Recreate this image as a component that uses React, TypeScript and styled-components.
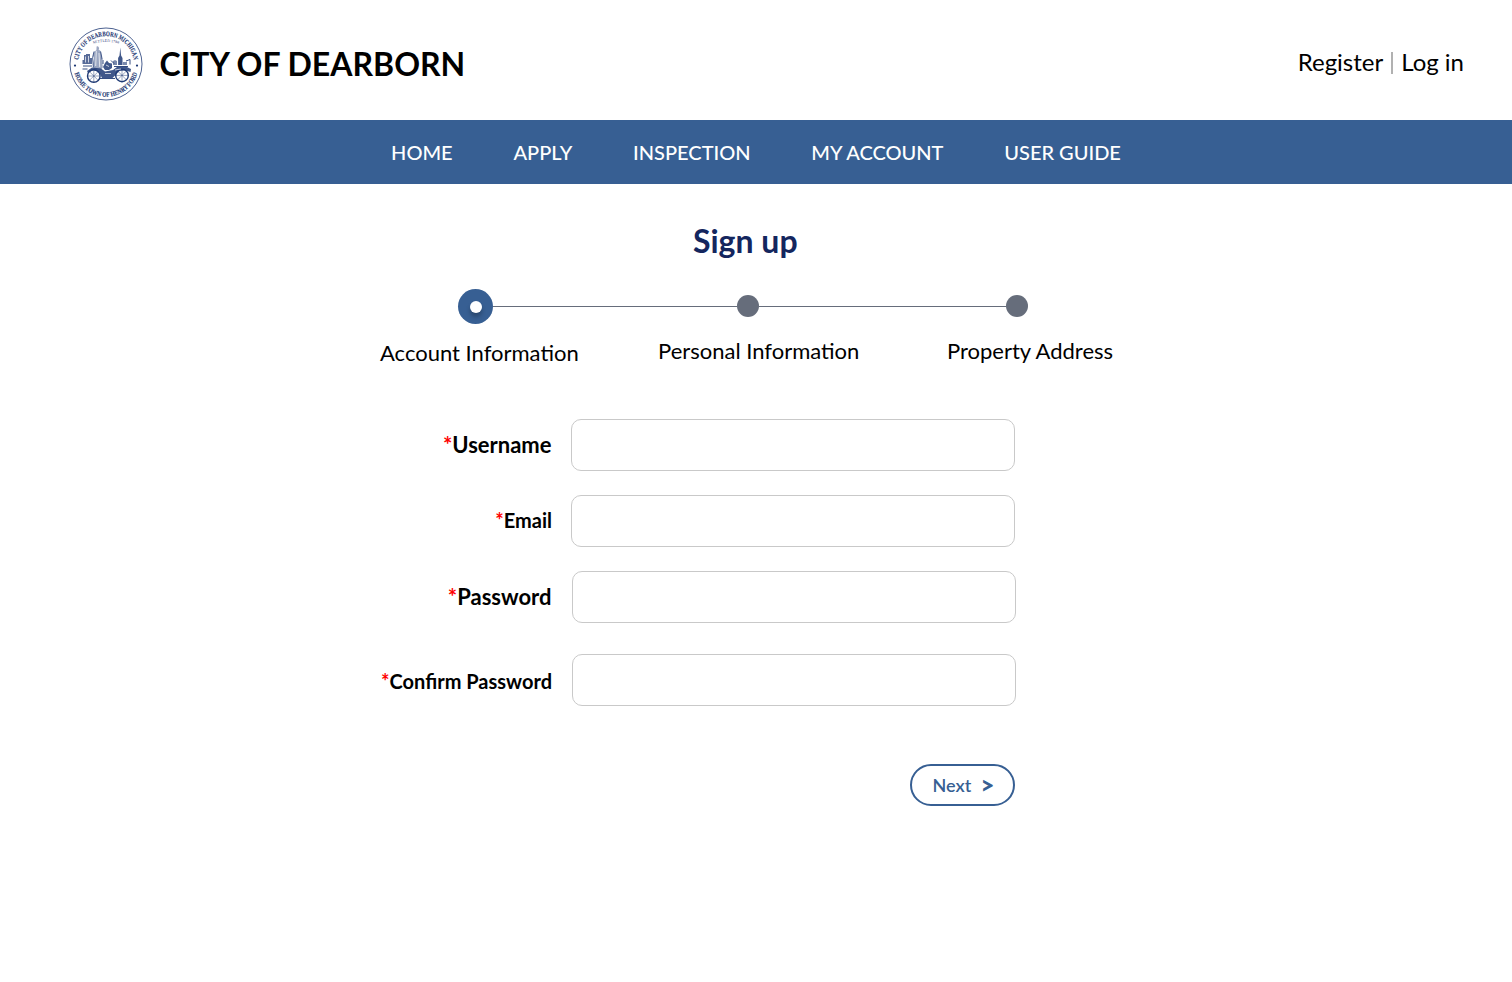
import React from "react";
import styled, { createGlobalStyle } from "styled-components";

const BLUE = "#375f93";
const NAVY = "#14265e";
const SEAL = "#1f3a75";
const SLATE = "#666d7b";

const GlobalStyle = createGlobalStyle`
  * { box-sizing: border-box; }
  body {
    margin: 0;
    background: #fff;
    color: #000;
    font-family: Lato, "Liberation Sans", sans-serif;
  }
`;

const Page = styled.div`
  min-height: 982px;
  white-space: nowrap;
`;

const Header = styled.header`
  height: 120px;
  padding: 27px 48px 0 69px;
  display: flex;
  align-items: flex-start;
  justify-content: space-between;
`;

const Brand = styled.div`
  display: flex;
  align-items: center;
  gap: 16.5px;
`;

const BrandName = styled.h1`
  margin: 0;
  font-size: 32px;
  line-height: 74px;
  font-weight: 700;
`;

const AuthLinks = styled.div`
  display: flex;
  align-items: center;
  height: 70px;
  gap: 8px;
`;

const AuthLink = styled.a`
  font-size: 24px;
  line-height: 30px;
`;

const Divider = styled.span`
  width: 2px;
  height: 22px;
  margin-top: 2px;
  background: #b1b1b1;
`;

const Nav = styled.nav`
  height: 64px;
  padding-bottom: 1px;
  background: ${BLUE};
  display: flex;
  align-items: center;
  justify-content: center;
  gap: 60.8px;
`;

const NavLink = styled.a`
  color: #fff;
  font-size: 20px;
  line-height: 26px;
  font-weight: 500;
`;

const Main = styled.main`
  width: 736px;
  margin: 0 auto 0 379px;
`;

const Title = styled.h2`
  margin: 0;
  padding: 37px 0 1px 314px;
  font-size: 32px;
  line-height: 40px;
  font-weight: 700;
  color: ${NAVY};
`;

const Track = styled.div`
  display: flex;
  align-items: center;
  height: 35px;
  margin: 27px 0 0 79px;
`;

const Dot = styled.span<{ $active?: boolean }>`
  flex: none;
  width: ${(p) => (p.$active ? 35 : 22)}px;
  height: ${(p) => (p.$active ? 35 : 22)}px;
  margin-bottom: ${(p) => (p.$active ? 0 : 1)}px;
  border-radius: 50%;
  background: ${(p) => (p.$active ? BLUE : SLATE)};
  display: flex;
  align-items: center;
  justify-content: center;
`;

const DotCore = styled.span`
  width: 12px;
  height: 12px;
  margin: 1px 0 0 1px;
  border-radius: 50%;
  background: #fff;
  box-shadow: 0 4px 4px rgba(0, 0, 0, 0.25);
`;

const Connector = styled.span<{ $width: number }>`
  width: ${(p) => p.$width}px;
  height: 1px;
  background: ${SLATE};
`;

const StepLabels = styled.div`
  display: flex;
  width: 735px;
  margin: 13px 0 0 1px;
`;

const StepLabel = styled.span<{ $active?: boolean; $width?: number }>`
  flex: none;
  width: ${(p) => (p.$width ? `${p.$width}px` : "auto")};
  font-size: 22px;
  line-height: 28px;
  padding-top: ${(p) => (p.$active ? 2 : 0)}px;
`;

const Form = styled.form`
  width: 637px;
  margin-top: 52px;
`;

const Field = styled.div<{ $gap: number }>`
  display: flex;
  align-items: center;
  height: 52px;
  margin-bottom: ${(p) => p.$gap}px;
`;

const FieldLabel = styled.label<{ $size: number; $top: number; $bottom: number; $inset: number }>`
  width: 173px;
  text-align: right;
  font-size: ${(p) => p.$size}px;
  line-height: 28px;
  font-weight: 700;
  padding: ${(p) => `${p.$top}px ${p.$inset}px ${p.$bottom}px 0`};
`;

const Star = styled.span`
  color: #f00;
`;

const Input = styled.input<{ $indent: number }>`
  width: 444px;
  height: 52px;
  margin-left: ${(p) => p.$indent}px;
  padding: 0 14px;
  border: 1px solid #c9c9c9;
  border-radius: 10px;
  background: #fff;
  font: inherit;
  outline: none;
`;

const NextButton = styled.button`
  display: flex;
  align-items: center;
  justify-content: space-between;
  width: 105px;
  height: 42px;
  margin: 58px 0 0 531px;
  padding: 0 18.5px 0 20.5px;
  border: 2px solid ${BLUE};
  border-radius: 21px;
  background: #fff;
  color: ${BLUE};
  font-family: inherit;
  font-size: 18px;
  line-height: 24px;
  font-weight: 600;
`;

const Arrow = styled.span`
  font-size: 24px;
  line-height: 24px;
  font-weight: 900;
`;

const Seal = () => (
  <svg width="74" height="74" viewBox="0 0 74 74" fill="none" stroke={SEAL}>
    <defs>
      <path id="sealTop" d="M9 37 A28 28 0 0 1 65 37" />
      <path id="sealBottom" d="M4.2 37 A32.8 32.8 0 0 0 69.8 37" />
      <path id="sealInner" d="M23 17 Q37 13 51 17" />
    </defs>
    <circle cx="37" cy="37" r="36" strokeWidth="0.8" />
    <g fill={SEAL} stroke="none" fontFamily="Liberation Serif, serif" fontWeight="700">
      <text fontSize="6.8" stroke={SEAL} strokeWidth="0.12">
        <textPath href="#sealTop" startOffset="50%" textAnchor="middle" textLength="80" lengthAdjust="spacingAndGlyphs">
          CITY OF DEARBORN MICHIGAN
        </textPath>
      </text>
      <text fontSize="6.8" stroke={SEAL} strokeWidth="0.12">
        <textPath href="#sealBottom" startOffset="50%" textAnchor="middle" textLength="84" lengthAdjust="spacingAndGlyphs">
          HOME TOWN OF HENRY FORD
        </textPath>
      </text>
      <text fontSize="3.8" fontWeight="400">
        <textPath href="#sealInner" startOffset="50%" textAnchor="middle" textLength="26">
          SETTLED 1786
        </textPath>
      </text>
      <circle cx="6" cy="38.6" r="1.1" />
      <circle cx="68" cy="38.6" r="1.1" />
      <path d="M13.5 37v-4h1.5v-5h2v-1h4v4h2v6z" opacity="0.75" />
      <path d="M51.3 20.5l.8 8 1.4 2.5V38h-4.4v-7l1.4-2.5z" opacity="0.85" />
      <path d="M44 38v-4l2-1 2 1v4zM54 38v-3h4v3z" opacity="0.6" />
      <path d="M27.6 19.5a1.8 1.8 0 0 1 2 2.9l2 1.6 1.4 7 .8 9.5-1.8 2h-7.2l-.6-6 .8-5-1-3 1.4-4 2-1.2z" opacity="0.45" />
      <path d="M36 36l2-2.4 2 2.4 3 .6V41l-3 2h-4l-2-3z" opacity="0.85" />
      <path d="M18 44l5-3.5 9 1 4 3 8-1.5 4-3 9-.5 5 2.5-.5 3-5-1.5-6 .5-4 4-3 3H33l-3-6-6-2-5 3z" opacity="0.85" />
    </g>
    <g strokeWidth="1.4">
      <circle cx="24.8" cy="49" r="6.3" />
      <circle cx="53" cy="48.4" r="6.3" />
    </g>
    <g strokeWidth="0.45">
      <path d="M24.8 43v12M19 49h12M20.6 44.8l8.4 8.4M29 44.8l-8.4 8.4M53 42.4v12M47 48.4h12M48.8 44.2l8.4 8.4M57.2 44.2l-8.4 8.4" />
      <path d="M31 51.5h15M14 39h9M13.5 42h5M45 39.5h14M57 34l4-1.5v5M34 33v4M42 33.5l3 3" strokeWidth="0.9" />
      <path d="M25 24.5l-1.4 6 .8 10M31.6 24.5l1.6 8" strokeWidth="0.8" />
    </g>
    <g stroke="#fff" strokeWidth="0.7">
      <path d="M27.3 24l-.6 15M30 26l.7 14M37 38l3 1.5M36 46.5h6M46 43l6-1M16.5 29.5v6M19.5 29v6.5" />
    </g>
  </svg>
);

const navItems = ["HOME", "APPLY", "INSPECTION", "MY ACCOUNT", "USER GUIDE"];

const fields = [
  { id: "username", label: "Username", type: "text", size: 22, indent: 19, gap: 24, top: 0, bottom: 0.5, inset: 0.5 },
  { id: "email", label: "Email", type: "email", size: 20, indent: 19, gap: 24, top: 0, bottom: 2, inset: 0 },
  { id: "password", label: "Password", type: "password", size: 22, indent: 20, gap: 31, top: 0, bottom: 0.5, inset: 0.5 },
  { id: "confirm", label: "Confirm Password", type: "password", size: 20, indent: 20, gap: 0, top: 4, bottom: 2, inset: 0 },
];

export default function App() {
  return (
    <Page>
      <GlobalStyle />
      <Header>
        <Brand>
          <Seal />
          <BrandName>CITY OF DEARBORN</BrandName>
        </Brand>
        <AuthLinks>
          <AuthLink>Register</AuthLink>
          <Divider />
          <AuthLink>Log in</AuthLink>
        </AuthLinks>
      </Header>
      <Nav>
        {navItems.map((item) => (
          <NavLink key={item}>{item}</NavLink>
        ))}
      </Nav>
      <Main>
        <Title>Sign up</Title>
        <Track>
          <Dot $active>
            <DotCore />
          </Dot>
          <Connector $width={244} />
          <Dot />
          <Connector $width={247} />
          <Dot />
        </Track>
        <StepLabels>
          <StepLabel $active $width={278}>Account Information</StepLabel>
          <StepLabel $width={289}>Personal Information</StepLabel>
          <StepLabel>Property Address</StepLabel>
        </StepLabels>
        <Form>
          {fields.map((f) => (
            <Field key={f.id} $gap={f.gap}>
              <FieldLabel htmlFor={f.id} $size={f.size} $top={f.top} $bottom={f.bottom} $inset={f.inset}>
                <Star>*</Star>
                {f.label}
              </FieldLabel>
              <Input id={f.id} type={f.type} $indent={f.indent} />
            </Field>
          ))}
          <NextButton type="button">
            <span>Next</span>
            <Arrow>&gt;</Arrow>
          </NextButton>
        </Form>
      </Main>
    </Page>
  );
}
